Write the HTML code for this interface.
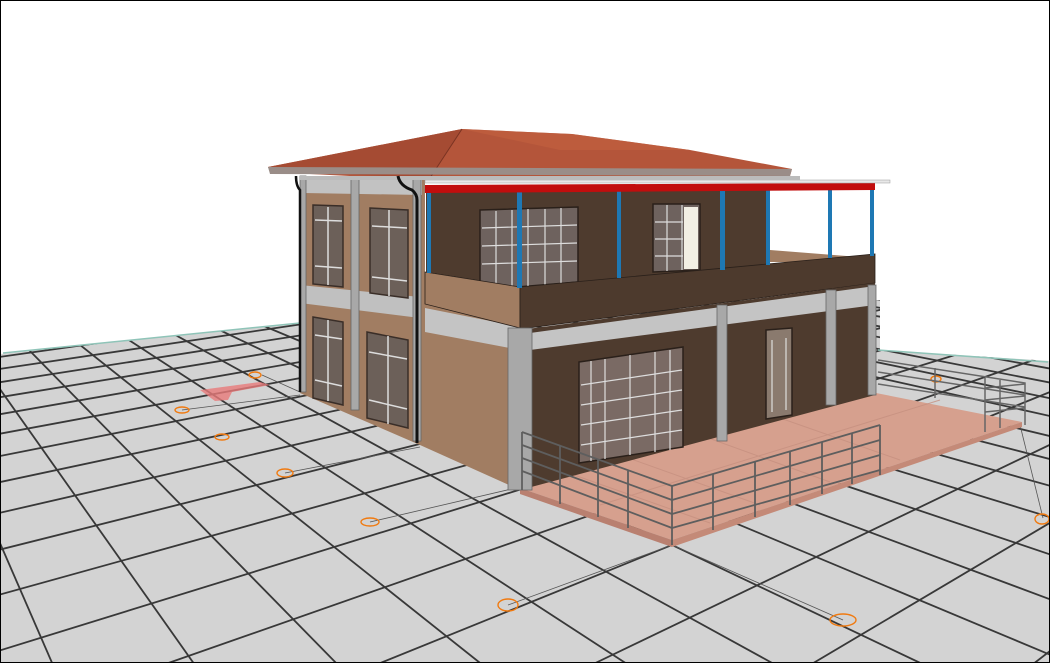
<!DOCTYPE html>
<html><head><meta charset="utf-8"><style>
html,body{margin:0;padding:0;background:#fff;overflow:hidden;width:1050px;height:663px;}
svg{display:block;overflow:hidden;}
</style></head><body>
<svg id="s" width="1050" height="663" viewBox="0 0 1050 663" xmlns="http://www.w3.org/2000/svg">
<defs>
<clipPath id="gc"><polygon points="0,354 300,323 300,300 880,300 880,350 1050,361 1050,663 0,663"/></clipPath>
</defs>
<rect width="1050" height="663" fill="#fff"/>
<polygon points="0,354 300,323 300,300 880,300 880,350 1050,361 1050,663 0,663" fill="#d3d3d3"/>
<g id="grid" clip-path="url(#gc)" stroke="#383838" stroke-width="1.8" fill="none"></g>
<line x1="3" y1="353" x2="300" y2="323" stroke="#8fc4b8" stroke-width="1.5"/>
<line x1="878" y1="350" x2="1048" y2="362" stroke="#8fc4b8" stroke-width="1.5"/>
<polygon points="200,390 230,386 260,382 270,385 232,392 228,400 215,401" fill="#e87a7a" opacity="0.8"/>
<g stroke="#555" stroke-width="0.8" fill="none">
<line x1="262" y1="375" x2="300" y2="392"/>
<line x1="182" y1="410" x2="300" y2="395"/>
<line x1="285" y1="473" x2="420" y2="447"/>
<line x1="370" y1="522" x2="520" y2="487"/>
<line x1="508" y1="605" x2="672" y2="545"/>
<line x1="672" y1="545" x2="843" y2="620"/>
<line x1="1020" y1="425" x2="1043" y2="518"/>
</g>
<g fill="none" stroke="#f07a10" stroke-width="1.4">
<ellipse cx="182" cy="410" rx="7" ry="3"/>
<ellipse cx="222" cy="437" rx="7" ry="3"/>
<ellipse cx="285" cy="473" rx="8" ry="4"/>
<ellipse cx="370" cy="522" rx="9" ry="4"/>
<ellipse cx="508" cy="605" rx="10" ry="6"/>
<ellipse cx="843" cy="620" rx="13" ry="6"/>
<ellipse cx="255" cy="375" rx="6" ry="3"/>
<ellipse cx="1042" cy="519" rx="7" ry="5"/>
<ellipse cx="936" cy="379" rx="5" ry="3"/>
</g>
<polygon points="520,488 672,540 1022,422 876,393" fill="#d6a08e"/>
<polygon points="520,488 672,540 672,547 520,494" fill="#b98070"/>
<polygon points="672,540 1022,422 1022,427 672,547" fill="#c48a78"/>
<g stroke="#c69080" stroke-width="1" fill="none" opacity="0.8">
<line x1="560" y1="470" x2="710" y2="523"/>
<line x1="620" y1="455" x2="760" y2="505"/>
<line x1="700" y1="435" x2="830" y2="482"/>
<line x1="780" y1="418" x2="900" y2="460"/>
<line x1="600" y1="505" x2="940" y2="400"/>
</g>
<g stroke="#666" stroke-width="1.5" fill="none">
<polyline points="878,360 1025,383 1025,425"/>
<line x1="878" y1="372" x2="1025" y2="395"/>
<line x1="878" y1="384" x2="1025" y2="407"/>
<line x1="985" y1="378" x2="985" y2="432"/>
<line x1="1000" y1="380" x2="1000" y2="428"/>
<line x1="935" y1="368" x2="935" y2="398"/>
<line x1="985" y1="388" x2="1025" y2="384"/>
<line x1="985" y1="400" x2="1025" y2="396"/>
<line x1="985" y1="412" x2="1025" y2="408"/>
</g>
<polygon points="268,167 462,129 572,134 690,150 792,169 790,176 430,180 270,172" fill="#b4553a"/>
<polygon points="268,167 462,129 430,178 270,171" fill="#a54b33"/>
<polygon points="462,129 572,134 690,150 560,150" fill="#c0603f" opacity="0.7"/>
<line x1="462" y1="129" x2="430" y2="178" stroke="#7a3322" stroke-width="1"/>
<polygon points="268,167 792,169 790,176 270,174" fill="#9a8d88"/>
<polygon points="300,176 425,180 425,272 520,287 520,490 420,445 300,393" fill="#a17d62"/>
<polygon points="304,176 422,180 422,195 304,193" fill="#c2c2c2"/>
<polygon points="300,285 420,297 420,318 300,303" fill="#c0c0c0"/>
<polygon points="425,308 520,327 520,350 425,332" fill="#c4c4c4"/>
<g fill="#a8a8a8" stroke="#666" stroke-width="0.8">
<rect x="300" y="176" width="6" height="216"/>
<rect x="351" y="177" width="8" height="233"/>
<rect x="413" y="179" width="8" height="262"/>
</g>
<g stroke="#3a2e28" stroke-width="1.5">
<polygon points="313,205 343,206 343,287 313,284" fill="#6c6059"/>
<polygon points="370,208 408,210 408,298 370,293" fill="#6c6059"/>
<polygon points="313,317 343,322 343,405 313,398" fill="#6c6059"/>
<polygon points="367,332 408,340 408,428 367,418" fill="#6c6059"/>
</g>
<g stroke="#ddd" stroke-width="1.5">
<line x1="315" y1="220" x2="342" y2="221"/><line x1="315" y1="266" x2="342" y2="268"/><line x1="328" y1="207" x2="328" y2="285"/>
<line x1="372" y1="226" x2="407" y2="228"/><line x1="372" y1="277" x2="407" y2="281"/><line x1="389" y1="210" x2="389" y2="296"/>
<line x1="315" y1="335" x2="342" y2="339"/><line x1="315" y1="380" x2="342" y2="386"/><line x1="328" y1="320" x2="328" y2="401"/>
<line x1="369" y1="352" x2="407" y2="359"/><line x1="369" y1="400" x2="407" y2="409"/><line x1="388" y1="336" x2="388" y2="424"/>
</g>
<rect x="770" y="188" width="105" height="70" fill="#fff"/>
<polygon points="770,250 872,258 872,262 770,262" fill="#a17d62"/>
<polygon points="426,188 770,188 770,266 520,287 426,272" fill="#4e3b2e"/>
<g stroke="#2a201a" stroke-width="1.5">
<polygon points="480,210 578,207 578,282 480,290" fill="#6e625e"/>
<polygon points="653,204 700,204 700,270 653,272" fill="#6e625e"/>
</g>
<rect x="684" y="207" width="14" height="62" fill="#f2efe4"/>
<g stroke="#ddd" stroke-width="1.2">
<line x1="496" y1="211" x2="496" y2="288"/><line x1="512" y1="210" x2="512" y2="287"/><line x1="528" y1="209" x2="528" y2="286"/><line x1="545" y1="209" x2="545" y2="285"/><line x1="561" y1="208" x2="561" y2="283"/>
<line x1="482" y1="228" x2="577" y2="225"/><line x1="482" y1="246" x2="577" y2="243"/><line x1="482" y1="264" x2="577" y2="261"/>
<line x1="667" y1="205" x2="667" y2="271"/><line x1="682" y1="205" x2="682" y2="270"/>
<line x1="655" y1="222" x2="683" y2="222"/><line x1="655" y1="239" x2="683" y2="239"/><line x1="655" y1="256" x2="683" y2="256"/>
</g>
<polygon points="425,272 520,287 520,328 425,304" fill="#a17d62" stroke="#2a201a" stroke-width="0.8"/>
<polygon points="520,287 875,254 875,283 520,329" fill="#4d3a2d" stroke="#2a201a" stroke-width="0.8"/>
<g fill="#1e78b4">
<rect x="427" y="188" width="4" height="85"/>
<rect x="517" y="188" width="5" height="100"/>
<rect x="617" y="188" width="4" height="90"/>
<rect x="720" y="188" width="5" height="82"/>
<rect x="766" y="188" width="4" height="77"/>
<rect x="828" y="188" width="4" height="70"/>
<rect x="870" y="188" width="4" height="68"/>
</g>
<polygon points="425,185 875,183 875,190 425,193" fill="#c20d0d"/>
<rect x="425" y="180" width="465" height="3" fill="#e8e8e8" stroke="#999" stroke-width="0.5"/>
<polygon points="300,176 800,176 800,180 300,180" fill="#bbb"/>
<polygon points="520,330 875,283 875,395 520,490" fill="#4e3b2e"/>
<polygon points="530,333 875,286 875,305 530,350" fill="#c4c4c4"/>
<g fill="#a8a8a8" stroke="#666" stroke-width="0.8">
<rect x="508" y="328" width="24" height="162"/>
<rect x="717" y="305" width="10" height="136"/>
<rect x="826" y="290" width="10" height="115"/>
<rect x="868" y="285" width="8" height="110"/>
</g>
<g stroke="#2a201a" stroke-width="1.5">
<polygon points="579,362 683,347 683,447 579,463" fill="#7a6a64"/>
<polygon points="766,330 792,328 792,415 766,419" fill="#8a7a6e"/>
</g>
<g stroke="#ddd" stroke-width="1.2">
<line x1="591" y1="361" x2="591" y2="461"/><line x1="605" y1="359" x2="605" y2="459"/><line x1="630" y1="355" x2="630" y2="455"/><line x1="655" y1="352" x2="655" y2="452"/><line x1="670" y1="350" x2="670" y2="450"/>
<line x1="581" y1="385" x2="682" y2="370"/><line x1="581" y1="405" x2="682" y2="390"/><line x1="581" y1="425" x2="682" y2="410"/><line x1="581" y1="445" x2="682" y2="430"/>
<line x1="772" y1="340" x2="772" y2="412"/><line x1="786" y1="338" x2="786" y2="410"/>
</g>
<path d="M296,176 Q296,186 300,190 L300,392" stroke="#111" stroke-width="2.5" fill="none"/>
<path d="M398,176 Q400,186 412,190 Q417,194 417,200 L417,443" stroke="#111" stroke-width="3" fill="none"/>
<g stroke="#5e5e5e" stroke-width="1.8" fill="none">
<line x1="522" y1="432" x2="672" y2="486"/>
<line x1="672" y1="486" x2="880" y2="425"/>
<line x1="522" y1="445" x2="672" y2="500"/>
<line x1="522" y1="458" x2="672" y2="514"/>
<line x1="522" y1="471" x2="672" y2="528"/>
<line x1="672" y1="500" x2="880" y2="440"/>
<line x1="672" y1="514" x2="880" y2="455"/>
<line x1="672" y1="528" x2="880" y2="470"/>
<line x1="522" y1="432" x2="522" y2="490"/>
<line x1="560" y1="446" x2="560" y2="504"/>
<line x1="598" y1="460" x2="598" y2="517"/>
<line x1="628" y1="471" x2="628" y2="528"/>
<line x1="672" y1="486" x2="672" y2="545"/>
<line x1="713" y1="474" x2="713" y2="530"/>
<line x1="755" y1="462" x2="755" y2="517"/>
<line x1="790" y1="451" x2="790" y2="505"/>
<line x1="822" y1="442" x2="822" y2="494"/>
<line x1="852" y1="433" x2="852" y2="484"/>
<line x1="880" y1="425" x2="880" y2="475"/>
</g>
<rect x="0.5" y="0.5" width="1049" height="662" fill="none" stroke="#000" stroke-width="1"/>
</svg>
<script>
(function(){
var g=document.getElementById('grid');
var VA=[-174,143],VB=[1747,110],O=[672,545],a=0.0913,b=0.0578;
function P(u,v){var d=1+a*u+b*v;return [(a*u*VA[0]+b*v*VB[0]+O[0])/d,(a*u*VA[1]+b*v*VB[1]+O[1])/d];}
var ns='http://www.w3.org/2000/svg';
function clip(p,q){
 var x0=p[0],y0=p[1],dx=q[0]-x0,dy=q[1]-y0,t0=0,t1=1;
 var P_=[-dx,dx,-dy,dy],Q=[x0-0,1050-x0,y0-0,663-y0];
 for(var i=0;i<4;i++){
  if(P_[i]===0){if(Q[i]<0)return null;}
  else{var r=Q[i]/P_[i];if(P_[i]<0){if(r>t1)return null;if(r>t0)t0=r;}else{if(r<t0)return null;if(r<t1)t1=r;}}
 }
 return [[x0+t0*dx,y0+t0*dy],[x0+t1*dx,y0+t1*dy]];
}
function ln(p,q){var c=clip(p,q);if(!c)return;var l=document.createElementNS(ns,'line');l.setAttribute('x1',c[0][0].toFixed(1));l.setAttribute('y1',c[0][1].toFixed(1));l.setAttribute('x2',c[1][0].toFixed(1));l.setAttribute('y2',c[1][1].toFixed(1));g.appendChild(l);}
for(var u=-20;u<=120;u++){var vs=Math.max(-60,(0.03-1-a*u)/b);var ve=200;if(ve>vs)ln(P(u,vs),P(u,ve));}
for(var v=-60;v<=200;v++){var us=Math.max(-20,(0.03-1-b*v)/a);var ue=120;if(ue>us)ln(P(us,v),P(ue,v));}
})();
</script>
</body></html>
